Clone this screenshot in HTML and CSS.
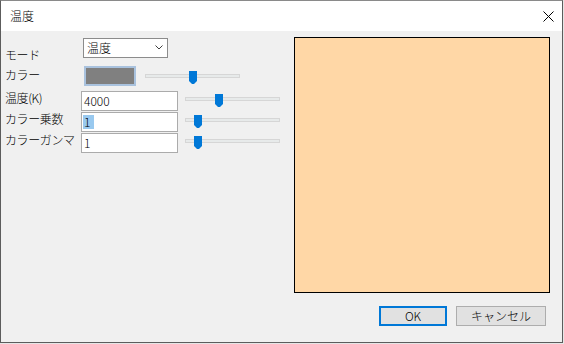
FILE: index.html
```html
<!DOCTYPE html>
<html>
  <head>
    <title>温度</title>
    <link rel="stylesheet" href="styles.css">
  </head>
  <body>
    <div class="window">
      <div class="titlebar">
        <span class="title">温度</span>
        <svg class="close" width="11" height="11" viewBox="0 0 11 11">
          <path d="M0.5 0.5 L10.5 10.5 M10.5 0.5 L0.5 10.5" stroke="#000" stroke-width="1" fill="none"/>
        </svg>
      </div>

      <div class="content">
        <div class="main">
          <div class="form">
            <div class="row row-mode">
              <span class="label">モード</span>
              <div class="combo">
                <span>温度</span>
                <svg width="8" height="5" viewBox="0 0 8 5">
                  <path d="M0.5 0.5 L4 4 L7.5 0.5" stroke="#404040" stroke-width="1" fill="none"/>
                </svg>
              </div>
            </div>

            <div class="row row-color">
              <span class="label">カラー</span>
              <div class="swatch"></div>
              <div class="slider slider-short">
                <div class="track"></div>
                <svg class="thumb" style="left: 44px" width="8" height="13" viewBox="0 0 8 13">
                  <polygon points="0,0 8,0 8,10 5,13 3,13 0,10" fill="#0078d7"/>
                </svg>
              </div>
            </div>

            <div class="row row-field">
              <span class="label">温度(K)</span>
              <div class="textbox">4000</div>
              <div class="slider">
                <div class="track"></div>
                <svg class="thumb" style="left: 30px" width="8" height="13" viewBox="0 0 8 13">
                  <polygon points="0,0 8,0 8,10 5,13 3,13 0,10" fill="#0078d7"/>
                </svg>
              </div>
            </div>

            <div class="row row-field">
              <span class="label">カラー乗数</span>
              <div class="textbox"><span class="selected">1</span></div>
              <div class="slider">
                <div class="track"></div>
                <svg class="thumb" style="left: 9px" width="8" height="13" viewBox="0 0 8 13">
                  <polygon points="0,0 8,0 8,10 5,13 3,13 0,10" fill="#0078d7"/>
                </svg>
              </div>
            </div>

            <div class="row row-field">
              <span class="label">カラーガンマ</span>
              <div class="textbox">1</div>
              <div class="slider">
                <div class="track"></div>
                <svg class="thumb" style="left: 9px" width="8" height="13" viewBox="0 0 8 13">
                  <polygon points="0,0 8,0 8,10 5,13 3,13 0,10" fill="#0078d7"/>
                </svg>
              </div>
            </div>
          </div>

          <div class="preview"></div>
        </div>

        <div class="buttons">
          <div class="button button-default">OK</div>
          <div class="button">キャンセル</div>
        </div>
      </div>
    </div>
  </body>
</html>
```

FILE: styles.css
```css
body {
  margin: 0;
  background-color: #e6e6e6;
  font-family: "Noto Sans CJK JP", "Noto Sans", sans-serif;
  font-size: 12px;
  font-weight: 300;
  color: #000;
}

.window {
  width: 561px;
  height: 341px;
  border: 1px solid #5c5c5c;
  border-top-color: #8a8a8a;
  background-color: #f0f0f0;
  display: flex;
  flex-direction: column;
}

.titlebar {
  height: 30px;
  background-color: #fff;
  display: flex;
  align-items: center;
  justify-content: space-between;
  padding: 0 8px 0 9px;
}

.title {
  line-height: 16px;
}

.content {
  flex: 1;
  display: flex;
  flex-direction: column;
}

.main {
  display: flex;
}

.form {
  width: 289px;
  padding: 7px 0 0 4px;
}

.row {
  display: flex;
  align-items: flex-start;
  height: 20px;
}

.label {
  width: 76px;
  line-height: 13px;
  white-space: nowrap;
  letter-spacing: -0.4px;
}

.row-mode .label {
  margin-top: 10px;
}

.row-color {
  margin-top: 8px;
}

.row-color .label {
  margin-top: 2px;
}

.row-field {
  margin-top: 1px;
}

.row-color + .row-field {
  margin-top: 5px;
}

.combo {
  box-sizing: border-box;
  width: 85px;
  height: 20px;
  margin-left: 2px;
  border: 1px solid #8c8c8c;
  background-color: #fff;
  display: flex;
  align-items: center;
  justify-content: space-between;
  padding: 0 4px 1px 3px;
  line-height: 16px;
}

.swatch {
  box-sizing: border-box;
  width: 52px;
  height: 20px;
  margin-left: 3px;
  border: 2px solid #a9c2de;
  background-color: #808080;
}

.textbox {
  box-sizing: border-box;
  width: 97px;
  height: 20px;
  border: 1px solid #ababab;
  background-color: #fff;
  padding: 0 0 0 2px;
  line-height: 17px;
}

.selected {
  display: inline-block;
  background-color: #99c9ef;
  padding: 0 4px 0 1px;
  margin-left: -1px;
  line-height: 14px;
  margin-top: 1px;
}

.slider {
  position: relative;
  width: 95px;
  height: 13px;
  margin: 3px 0 0 7px;
}

.slider-short {
  margin: 5px 0 0 9px;
}

.track {
  box-sizing: border-box;
  height: 4px;
  margin-top: 3px;
  border: 1px solid #d6d6d6;
  background-color: #e7eaea;
}

.thumb {
  position: absolute;
  top: 0;
  display: block;
}

.preview {
  box-sizing: border-box;
  width: 256px;
  height: 256px;
  margin-top: 6px;
  border: 1px solid #000;
  background-color: #ffd7a6;
}

.buttons {
  display: flex;
  justify-content: flex-end;
  gap: 9px;
  margin-top: 13px;
  padding-right: 16px;
}

.button {
  box-sizing: border-box;
  width: 90px;
  height: 20px;
  border: 1px solid #adadad;
  background-color: #e1e1e1;
  display: flex;
  align-items: center;
  justify-content: center;
  line-height: 16px;
}

.button-default {
  width: 68px;
  border: 2px solid #0078d7;
}
```
